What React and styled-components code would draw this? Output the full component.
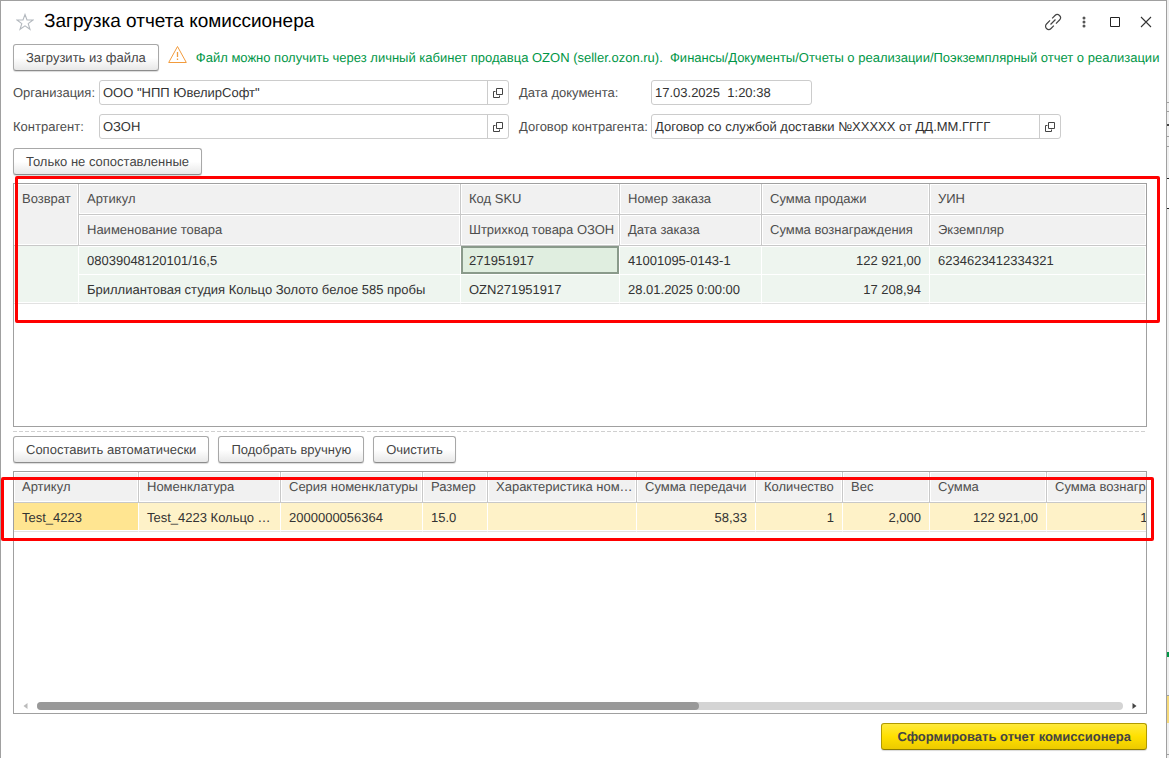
import React from "react";
import styled, { createGlobalStyle, css } from "styled-components";

const GlobalStyle = createGlobalStyle`
  *, *::before, *::after { box-sizing: border-box; }
  body {
    margin: 0;
    background: #fff;
    color: #333;
    font: 13px/16px "Liberation Sans", Arial, sans-serif;
    text-rendering: geometricPrecision;
  }
  button, input { font: inherit; color: inherit; text-rendering: inherit; }
`;

const Screen = styled.div`
  display: flex;
  min-height: 100vh;
`;

const Window = styled.main`
  flex: 1;
  min-width: 0;
  display: flex;
  flex-direction: column;
  padding: 0 19px 8px 12px;
  border: 1px solid #a0a0a0;
  border-bottom: 0;
  background: #fff;
`;

const Backdrop = styled.div`
  width: 2px;
  background: linear-gradient(
    #f0f0f0 102px, #a0a0a0 102px 103px, #f0f0f0 103px 111px, #a0a0a0 111px 112px,
    #f0f0f0 112px 124px, #444 124px 126px, #f0f0f0 126px 136px, #a0a0a0 136px 137px,
    #f0f0f0 137px 146px, #a0a0a0 146px 147px, #f0f0f0 147px 178px, #222 178px 179px,
    #fff 179px 208px, #222 208px 209px, #f0f0f0 209px 652px, #009646 652px 657px,
    #f0f0f0 657px 695px, #a0a0a0 695px 696px, #f5d97a 696px 723px, #f0f0f0 723px 754px,
    #a0a0a0 754px 755px, #f0f0f0 755px
  );
`;

const TitleBar = styled.header`
  display: flex;
  align-items: center;
  height: 43px;
  padding: 0 0 2px 3px;
`;

const Title = styled.h1`
  flex: 1;
  margin: 0 0 0 10px;
  font-size: 19px;
  line-height: 21px;
  font-weight: 400;
  color: #000;
`;

const IconButton = styled.button`
  display: flex;
  align-items: center;
  justify-content: center;
  padding: 0;
  border: 0;
  background: none;
  color: #444;
`;

const WindowTools = styled.div`
  display: grid;
  grid-template-columns: 18px 18px 18px 18px;
  column-gap: 13px;
  margin-right: -8px;
`;

const Toolbar = styled.div`
  display: flex;
  align-items: flex-start;
  gap: 9px;
`;

const Button = styled.button`
  flex: none;
  height: 27px;
  padding: 0 12px;
  border: 1px solid #a8a8a8;
  border-bottom-color: #8c8c8c;
  border-radius: 3px;
  background: linear-gradient(#fff 50%, #e8e8e8);
  box-shadow: 0 1px 1px rgba(0, 0, 0, 0.15);
  color: #444;
  white-space: nowrap;
  ${(p) =>
    p.$primary &&
    css`
      padding: 0 15px;
      border-color: #b09a00;
      border-bottom-color: #8f7d00;
      background: linear-gradient(#ffea3c, #ffe000 50%, #ecca00);
      font-weight: 700;
    `}
`;

const Hint = styled.p`
  display: flex;
  align-items: center;
  gap: 9px;
  height: 27px;
  margin: 0;
  color: #009646;
  white-space: pre;
  svg { align-self: flex-start; }
`;

const Form = styled.form`
  display: grid;
  grid-template-columns: 86px minmax(0, 410px) 142px minmax(0, 410px);
  row-gap: 9px;
  margin: 9px 0;
`;

const Label = styled.label`
  align-self: center;
  padding-left: ${(p) => (p.$second ? 10 : 0)}px;
  color: #4d4d4d;
  white-space: nowrap;
`;

const Field = styled.div`
  display: flex;
  width: ${(p) => (p.$short ? "161px" : "auto")};
  height: 25px;
  border: 1px solid #ccc;
  border-radius: 3px;
`;

const TextInput = styled.input`
  flex: 1;
  min-width: 0;
  padding: 0 3px;
  border: 0;
  background: none;
  white-space: pre;
`;

const OpenButton = styled(IconButton)`
  width: 21px;
  border-left: 1px solid #ccc;
`;

const Panel = styled.section`
  position: relative;
  flex: 1 1 ${(p) => p.$basis}px;
  display: flex;
  flex-direction: column;
  margin-top: 8px;
  border: 1px solid #a0a0a0;
`;

const TableArea = styled.div`
  flex: 1;
  overflow: hidden;
`;

const Table = styled.table`
  width: ${(p) => p.$width};
  table-layout: fixed;
  border-collapse: separate;
  border-spacing: 0;
`;

const Col = styled.col`
  width: ${(p) => (p.$w ? `${p.$w}px` : "auto")};
`;

const HeadCell = styled.th`
  height: 31px;
  padding: ${(p) => (p.rowSpan ? 7 : 0)}px 2px 0 8px;
  border: solid #c8c8c8;
  border-width: 0 1px 1px 0;
  background: #f1f1f1;
  box-shadow: inset 0 0 0 1px #fff;
  color: #4d4d4d;
  font-weight: 400;
  text-align: left;
  vertical-align: ${(p) => (p.rowSpan ? "top" : "middle")};
  white-space: nowrap;
  overflow: hidden;
  &:last-child { border-right-width: 0; }
`;

const tones = {
  green: "#eef5ef",
  yellow: "#fef2c8",
  selected: "#ffe591",
  focused: "#e0eee0",
};

const Cell = styled.td`
  height: 29px;
  padding: 1px 8px 0;
  border: solid #fff;
  border-width: 0 1px 1px 0;
  border-bottom-color: ${(p) => (p.$end ? "#e2e2e2" : "#fff")};
  background: ${(p) => tones[p.$tone]};
  box-shadow: ${(p) =>
    p.$tone === "focused"
      ? "inset 0 0 0 2px #8a9a8b"
      : p.$end
        ? "inset 0 -1px #fff"
        : "inset 0 1px #fff"};
  text-align: ${(p) => (p.$num ? "right" : "left")};
  white-space: nowrap;
  overflow: hidden;
`;

const Highlight = styled.div`
  position: absolute;
  top: ${(p) => p.$top}px;
  left: ${(p) => p.$left}px;
  right: ${(p) => p.$right}px;
  height: ${(p) => p.$height}px;
  border: 3px solid #f00;
  border-radius: 2px;
  pointer-events: none;
`;

const Splitter = styled.hr`
  width: 100%;
  height: 1px;
  margin: 4px 0;
  border: 0;
  background: repeating-linear-gradient(90deg, #d0d0d0 0 4px, #fff 4px 6px);
`;

const ScrollBar = styled.div`
  display: flex;
  align-items: center;
  gap: 9px;
  height: 14px;
  padding: 0 9px;
`;

const Track = styled.div`
  flex: 1;
  height: 8px;
  border-radius: 4px;
  background: #d4d4d4;
`;

const Thumb = styled.div`
  width: 61%;
  height: 8px;
  border-radius: 4px;
  background: #999;
`;

const Footer = styled.footer`
  display: flex;
  justify-content: flex-end;
  margin-top: 9px;
`;

const StarIcon = () => (
  <svg width="18" height="18" viewBox="0 0 18 18" fill="none" stroke="#b4b9bf" strokeWidth="1.1">
    <path d="M9 1.5 11 7h6l-4.800 3.600L14 16.300 9 12.900 4 16.300l1.800-5.700L1 7h6z" />
  </svg>
);

const LinkIcon = () => (
  <svg width="18" height="18" viewBox="0 0 18 18" fill="none" stroke="currentColor" strokeWidth="1.2">
    <g transform="rotate(-45 9 9)">
      <path d="M8 5.800H3a3.200 3.200 0 0 0 0 6.400h4M10 12.200h5a3.200 3.200 0 0 0 0-6.400h-4M5.500 9h7" />
    </g>
  </svg>
);

const DotsIcon = () => (
  <svg width="4" height="12" viewBox="0 0 4 12" fill="#555">
    <circle cx="2" cy="2" r="1.500" />
    <circle cx="2" cy="6" r="1.500" />
    <circle cx="2" cy="10" r="1.500" />
  </svg>
);

const MaximizeIcon = () => (
  <svg width="10" height="10" viewBox="0 0 10 10" fill="none" stroke="#222">
    <path d="M.5.5h9v9h-9z" />
  </svg>
);

const CloseIcon = () => (
  <svg width="12" height="12" viewBox="0 0 12 12" fill="none" stroke="#333" strokeWidth="1.1">
    <path d="m1 1 10 10M11 1 1 11" />
  </svg>
);

const WarningIcon = () => (
  <svg width="19" height="20" viewBox="0 0 19 20" fill="none" stroke="#f29b3c">
    <path d="M9.500 2.500 18.300 18.500H.7z" />
    <path d="M9.500 8v5M9.500 14.500V16" strokeWidth="1.300" />
  </svg>
);

const OpenIcon = () => (
  <svg width="10" height="10" viewBox="0 0 10 10" fill="none" stroke="#444">
    <path d="M3.500.5h6v6h-6zM2.500 3.500h-2v6h6v-2" />
  </svg>
);

const Arrow = ({ left }) => (
  <svg width="5" height="6" viewBox="0 0 5 6" fill={left ? "#bbb" : "#444"}>
    <path d={left ? "M4.500 0v6L.5 3z" : "M.5 0v6l4-3z"} />
  </svg>
);

const salesCols = [65, 382, 159, 142, 168, null];
const salesHead = [
  ["Артикул", "Код SKU", "Номер заказа", "Сумма продажи", "УИН"],
  ["Наименование товара", "Штрихкод товара ОЗОН", "Дата заказа", "Сумма вознаграждения", "Экземпляр"],
];
const salesRows = [
  ["08039048120101/16,5", "271951917", "41001095-0143-1", "122 921,00", "6234623412334321"],
  ["Бриллиантовая студия Кольцо Золото белое 585 пробы", "OZN271951917", "28.01.2025 0:00:00", "17 208,94", ""],
];

const stock = [
  { w: 125, head: "Артикул", value: "Test_4223" },
  { w: 142, head: "Номенклатура", value: "Test_4223 Кольцо …" },
  { w: 142, head: "Серия номенклатуры", value: "2000000056364" },
  { w: 65, head: "Размер", value: "15.0" },
  { w: 149, head: "Характеристика ном…", value: "" },
  { w: 119, head: "Сумма передачи", value: "58,33", num: true },
  { w: 87, head: "Количество", value: "1", num: true },
  { w: 87, head: "Вес", value: "2,000", num: true },
  { w: 117, head: "Сумма", value: "122 921,00", num: true },
  { w: 160, head: "Сумма вознаграждения", value: "17 208,94", num: true },
];

function ReferenceField({ id, label, value, second }) {
  return (
    <>
      <Label htmlFor={id} $second={second}>{label}</Label>
      <Field>
        <TextInput id={id} defaultValue={value} />
        <OpenButton type="button" aria-label="Открыть"><OpenIcon /></OpenButton>
      </Field>
    </>
  );
}

function SalesTable() {
  return (
    <Table $width="100%">
      <colgroup>{salesCols.map((w, i) => <Col key={i} $w={w} />)}</colgroup>
      <thead>
        {salesHead.map((row, r) => (
          <tr key={r}>
            {r === 0 && <HeadCell rowSpan={2}>Возврат</HeadCell>}
            {row.map((text) => <HeadCell key={text}>{text}</HeadCell>)}
          </tr>
        ))}
      </thead>
      <tbody>
        {salesRows.map((row, r) => (
          <tr key={r}>
            {r === 0 && <Cell rowSpan={2} $tone="green" $end />}
            {row.map((text, c) => (
              <Cell key={c} $tone={r === 0 && c === 1 ? "focused" : "green"} $num={c === 3} $end={r === 1}>
                {text}
              </Cell>
            ))}
          </tr>
        ))}
      </tbody>
    </Table>
  );
}

function StockTable() {
  return (
    <Table $width="1193px">
      <colgroup>{stock.map((c) => <Col key={c.head} $w={c.w} />)}</colgroup>
      <thead>
        <tr>{stock.map((c) => <HeadCell key={c.head}>{c.head}</HeadCell>)}</tr>
      </thead>
      <tbody>
        <tr>
          {stock.map((c, i) => (
            <Cell key={c.head} $tone={i === 0 ? "selected" : "yellow"} $num={c.num} $end>{c.value}</Cell>
          ))}
        </tr>
      </tbody>
    </Table>
  );
}

export default function App() {
  return (
    <Screen>
      <GlobalStyle />
      <Window>
        <TitleBar>
          <IconButton aria-label="В избранное"><StarIcon /></IconButton>
          <Title>Загрузка отчета комиссионера</Title>
          <WindowTools>
            <IconButton aria-label="Ссылка"><LinkIcon /></IconButton>
            <IconButton aria-label="Ещё"><DotsIcon /></IconButton>
            <IconButton aria-label="Развернуть"><MaximizeIcon /></IconButton>
            <IconButton aria-label="Закрыть"><CloseIcon /></IconButton>
          </WindowTools>
        </TitleBar>
        <Toolbar>
          <Button>Загрузить из файла</Button>
          <Hint>
            <WarningIcon />
            {"Файл можно получить через личный кабинет продавца OZON (seller.ozon.ru).  Финансы/Документы/Отчеты о реализации/Поэкземплярный отчет о реализации"}
          </Hint>
        </Toolbar>
        <Form>
          <ReferenceField id="org" label="Организация:" value={'ООО "НПП ЮвелирСофт"'} />
          <Label htmlFor="date" $second>Дата документа:</Label>
          <Field $short><TextInput id="date" defaultValue="17.03.2025  1:20:38" /></Field>
          <ReferenceField id="partner" label="Контрагент:" value="ОЗОН" />
          <ReferenceField id="contract" label="Договор контрагента:" value="Договор со службой доставки №XXXXX от ДД.ММ.ГГГГ" second />
        </Form>
        <Toolbar>
          <Button>Только не сопоставленные</Button>
        </Toolbar>
        <Panel $basis={201}>
          <TableArea><SalesTable /></TableArea>
          <Highlight $top={-8} $left={1} $right={-14} $height={147} />
        </Panel>
        <Splitter />
        <Toolbar>
          <Button>Сопоставить автоматически</Button>
          <Button>Подобрать вручную</Button>
          <Button>Очистить</Button>
        </Toolbar>
        <Panel $basis={200}>
          <TableArea><StockTable /></TableArea>
          <ScrollBar>
            <Arrow left />
            <Track><Thumb /></Track>
            <Arrow />
          </ScrollBar>
          <Highlight $top={5} $left={-13} $right={-8} $height={64} />
        </Panel>
        <Footer>
          <Button $primary>Сформировать отчет комиссионера</Button>
        </Footer>
      </Window>
      <Backdrop />
    </Screen>
  );
}
